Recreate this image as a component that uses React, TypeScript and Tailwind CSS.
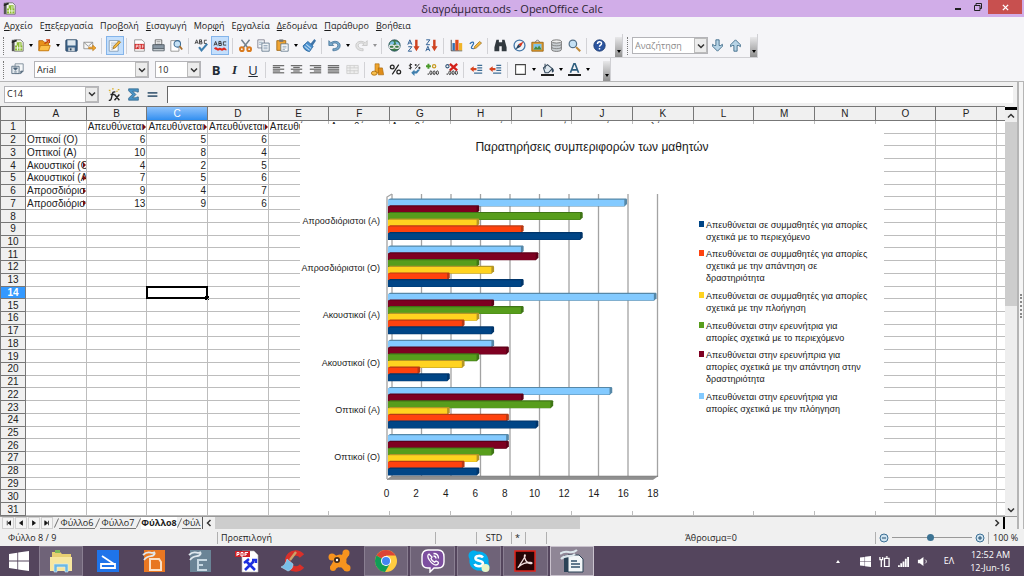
import React from 'react';
import { FaViber, FaSkype } from 'react-icons/fa';

const MENUS = ['Αρχείο', 'Επεξεργασία', 'Προβολή', 'Εισαγωγή', 'Μορφή', 'Εργαλεία', 'Δεδομένα', 'Παράθυρο', 'Βοήθεια'];
// index of the underlined accelerator letter in each menu name
const ACCEL = [0, 1, 3, 0, 3, 1, 0, 0, 0];

const COLS = 'ABCDEFGHIJKLMNOP'.split('');

const CELLS: Record<number, string[]> = {
    1: ['', 'Απευθύνεται', 'Απευθύνεται', 'Απευθύνεται', 'Απευθύνεται', 'Απευθύνεται', 'Απευθύνεται στην ερευνήτρια για απορίες σχετικά με την πλόηγηση'],
    2: ['Οπτικοί (Ο)', '6', '5', '6'],
    3: ['Οπτικοί (Α)', '10', '8', '4'],
    4: ['Ακουστικοί (Ο', '4', '2', '5'],
    5: ['Ακουστικοί (Α', '7', '5', '6'],
    6: ['Απροσδιόρισ', '9', '4', '7'],
    7: ['Απροσδιόρισ', '13', '9', '6'],
};

const SERIES = [
    { color: '#004586', dark: '#00356a', lines: ['Απευθύνεται σε συμμαθητές για απορίες', 'σχετικά με το περιεχόμενο'], y: 228 },
    { color: '#ff420e', dark: '#b83a14', lines: ['Απευθύνεται σε συμμαθητές για απορίες', 'σχετικά με την απάντηση σε', 'δραστηριότητα'], y: 257 },
    { color: '#ffd320', dark: '#b39627', lines: ['Απευθύνεται σε συμμαθητές για απορίες', 'σχετικά με την πλοήγηση'], y: 299 },
    { color: '#579d1c', dark: '#3f7516', lines: ['Απευθύνεται στην ερευνήτρια για', 'απορίες σχετικά με το περιεχόμενο'], y: 329 },
    { color: '#7e0021', dark: '#5c0018', lines: ['Απευθύνεται στην ερευνήπρια για', 'απορίες σχετικά με την απάντηση στην', 'δραστηριότητα'], y: 358 },
    { color: '#83caff', dark: '#5688a8', lines: ['Απευθύνεται στην ερευνήτρια για', 'απορίες σχετικά με την πλόηγηση'], y: 400 },
];

// values go from the top bar of the group to the bottom one
const GROUPS = [
    { name: 'Απροσδιόριστοι (Α)', values: [16, 6, 13, 6, 9, 13] },
    { name: 'Απροσδιόριστοι (Ο)', values: [9, 10, 6, 7, 4, 9] },
    { name: 'Ακουστικοί (Α)', values: [18, 7, 9, 6, 5, 7] },
    { name: 'Ακουστικοί (Ο)', values: [7, 8, 6, 5, 2, 4] },
    { name: 'Οπτικοί (Α)', values: [15, 9, 11, 4, 8, 10] },
    { name: 'Οπτικοί (Ο)', values: [8, 8, 7, 6, 5, 6] },
];

const lines = (xs: number[][]) => (
    <g fill="#6b6b6b">
        {xs.map(([x, w], i) => <rect key={i} x={x} y={2.5 + i * 2.2} width={w} height="1.5" />)}
    </g>
);

const ICONS: Record<string, React.ReactNode> = {
    new: <><path d="M1 1h3v14H1z" fill="#555" /><path d="M4 1h8l3 3v11H4z" fill="#f4f7ee" stroke="#666" /><path d="M5 8h9v6H5zM7 4h6v10H7z" fill="#8dbb2f" /><path d="M5 11h9M8 8v6M11 5v9" stroke="#fff" /><path d="M1 4c3 0 3-2 6-2" stroke="#222" strokeWidth="2" fill="none" /></>,
    open: <><path d="M1 2h5l2 2h5v10H1z" fill="#e8921c" stroke="#b36308" /><path d="M3 8h12l-2 6.500H1z" fill="#fbc04a" stroke="#c47712" /><path d="M8 6l5-4M10 1h4v4" stroke="#c43c12" strokeWidth="1.500" fill="none" /></>,
    save: <><rect x="1" y="1" width="14" height="14" rx="1" fill="#3b6288" stroke="#27435f" /><path d="M3 1.500h10V8H3z" fill="#dfe8ef" /><path d="M4 10.500h8V15H4z" fill="#cbd3da" /><path d="M6 11.500h2V14H6z" fill="#27435f" /></>,
    mail: <><path d="M1 4h11v8H1z" fill="#f5f5f5" stroke="#888" /><path d="M1 4l5.500 5L12 4" fill="none" stroke="#888" /><path d="M7 10h5V7.500l4 3.500-4 3.500V12H7z" fill="#f0a52c" stroke="#b8700d" strokeWidth=".7" /></>,
    edit: <><path d="M1.500 2h11v13h-11z" fill="#fff" stroke="#7d94ab" /><path d="M3.500 5h7M3.500 7.500h7M3.500 10h4M3.500 12.500h3" stroke="#9ab" /><path d="M6 12l1-3 6.500-7 2 2L9 11z" fill="#f3b63b" stroke="#8a6217" strokeWidth=".8" /></>,
    pdf: <><path d="M2 1h9l3 3v11H2z" fill="#fff" stroke="#888" /><path d="M2 6h12v6.500H2z" fill="#d32f2f" /><path d="M4 11.500V7.500h1.800v1.700H4M7.500 7.500v4H9v-4zM11.500 11.500v-4H13M11.500 9.500H13" stroke="#fff" fill="none" strokeWidth=".8" /></>,
    print: <><path d="M4 1h8v6H4z" fill="#fff" stroke="#555" /><path d="M1 7h14v5H1z" fill="#8997a3" stroke="#47525c" /><path d="M1 12h14v2.500H1z" fill="#dfe4e8" stroke="#47525c" /><path d="M5.500 3h5M5.500 5h5" stroke="#999" /></>,
    preview: <><path d="M1 2h10v13H1z" fill="#fff" stroke="#888" /><circle cx="9" cy="6" r="4" fill="#c5e1f5" stroke="#3f6e95" strokeWidth="1.300" /><path d="M12 9l3 4" stroke="#a86d2a" strokeWidth="2.200" /></>,
    spell: <><path d="M0 6l2-5 2 5M.7 4.500h2.600M5.500 1v5h3V3.500h-3 2.500V1zM14.500 1.500h-3v4h3" stroke="#333" fill="none" /><path d="M5 10l3 4 7-8" stroke="#3f7fae" strokeWidth="2.600" fill="none" /></>,
    auto: <><path d="M0 8l2-5 2 5M.7 6.500h2.600M6 3v5h3V5.500H6 8.500V3zM15 3.500h-3.500v4H15" stroke="#333" fill="none" strokeWidth="1.100" /><path d="M1 12.500c2-3 3 2 5 0s3 2 5 0 3 1 4 0" stroke="#e0281e" strokeWidth="2.600" fill="none" /></>,
    cut: <><path d="M3 1l8 10M13 1L5 11" stroke="#73818d" strokeWidth="1.800" /><circle cx="3.500" cy="12.500" r="2.300" fill="none" stroke="#d97a1e" strokeWidth="2.400" /><circle cx="12.500" cy="12.500" r="2.300" fill="none" stroke="#d97a1e" strokeWidth="2.400" /></>,
    copy: <><path d="M1 1h8v10H1z" fill="#f2f5f8" stroke="#778" /><path d="M6 5h9v10H6z" fill="#f2f5f8" stroke="#5d7388" /><path d="M2.500 4h4M2.500 6.500h3M8 8h5M8 10h5M8 12h5" stroke="#8aa0b5" /></>,
    paste: <><path d="M1 2h11v12H1z" fill="#f0a534" stroke="#9b6310" /><path d="M4 .5h5v3H4z" fill="#777" /><path d="M6 6h9v9H6z" fill="#fff" stroke="#5d7388" /><path d="M8 9h5M8 11h5M8 13h3" stroke="#8aa0b5" /></>,
    brush: <><path d="M9 6l5-6 2 2-4 6z" fill="#3f74a8" /><path d="M6 3l6.500 6L8 15.500c-4-.5-7-3-8-7z" fill="#4a90cf" stroke="#235f98" /><path d="M2 9l6 5M4 6.500l6 5" stroke="#bcdcf5" strokeWidth="1.300" /></>,
    undo: <path d="M1 2v6h6L5 6c3-2 7-1 7 2s-3 4-6 4v2.500c5 0 9-2 9-6.500S9 1 3.500 4.500z" fill="#78a7c9" stroke="#33658c" strokeWidth=".8" />,
    redo: <path d="M15 2v6H9l2-2C8 4 4 5 4 8s3 4 6 4v2.500C5 14.500 1 12.500 1 8s6-7 11.500-3.500z" fill="#e2e2e2" stroke="#bbb" strokeWidth=".8" />,
    link: <><circle cx="8" cy="8" r="7" fill="#3b7d45" stroke="#244b5f" /><path d="M3 4c3-3 6 0 4 2S3 8 2 7zM9 3c3 0 5 2 5 4s-3 0-4-1z" fill="#7ec0e8" /><rect x="1.500" y="7.500" width="6" height="4" rx="2" fill="none" stroke="#e8e8e8" strokeWidth="1.400" /><rect x="8" y="7.500" width="6" height="4" rx="2" fill="none" stroke="#e8e8e8" strokeWidth="1.400" /></>,
    az: <><path d="M1 7l2.500-6L6 7M2 5h3M1.500 9.500H6L1.500 15H6" stroke="#2f5f93" strokeWidth="1.200" fill="none" /><path d="M10 1h3v8h2.500L11.500 15 8 9h2z" fill="#cf4321" /></>,
    za: <><path d="M1.500 1H6L1.500 7H6M1 15l2.500-6L6 15M2 13h3" stroke="#2f5f93" strokeWidth="1.200" fill="none" /><path d="M10 1h3v8h2.500L11.500 15 8 9h2z" fill="#cf4321" /></>,
    chart: <><path d="M1.500 1v13.500H15" stroke="#333" fill="none" /><path d="M3 5h3v9H3z" fill="#2f6fb2" /><path d="M6.500 1h4v13h-4z" fill="#e04a1c" /><path d="M11 5h4v9h-4z" fill="#f0b428" /></>,
    draw: <><path d="M1 6c3-4 6-2 4 1s-4 5 1 5" stroke="#2f6fb2" strokeWidth="1.500" fill="none" /><path d="M6 12l1-3 6-6 2.500 2L9 11z" fill="#f3b63b" stroke="#8a6217" strokeWidth=".8" /></>,
    find: <path d="M3 1h3v3h4V1h3l2.500 9v5h-6V9h-3v6h-6v-5z" fill="#32393f" />,
    nav: <><circle cx="8" cy="8" r="6.700" fill="#eef4fa" stroke="#4577a8" strokeWidth="1.600" /><path d="M13 3L9.500 9.500 6.500 6.500z" fill="#d8361d" /><path d="M3 13l3.500-6.500 3 3z" fill="#27435f" /></>,
    gallery: <><path d="M5 4l3-3 3 3" stroke="#555" fill="none" /><path d="M1 4h14v11H1z" fill="#e09a2d" stroke="#93600f" /><path d="M3 6h10v7H3z" fill="#7cc2e8" /><path d="M3 13l3-4 2 2 2-3 3 5z" fill="#4a8a3a" /></>,
    data: <><path d="M2 3v10c0 3 12 3 12 0V3z" fill="#c9ced2" stroke="#666" /><ellipse cx="8" cy="3" rx="6" ry="2" fill="#eee" stroke="#666" /><path d="M2 6.500c0 2.500 12 2.500 12 0M2 10c0 2.500 12 2.500 12 0" stroke="#777" fill="none" /></>,
    zoom: <><circle cx="6" cy="6" r="4.600" fill="#c5e1f5" stroke="#55718a" strokeWidth="1.500" /><path d="M10 10l5 5" stroke="#c08a3a" strokeWidth="2.600" /></>,
    help: <><circle cx="8" cy="8" r="7" fill="#2c55a0" stroke="#18366d" /><path d="M5.500 6c0-3.500 5-3.500 5-.5 0 2-2.500 2-2.500 4M8 11v2" stroke="#fff" strokeWidth="1.800" fill="none" /></>,
    styles: <><path d="M5 1h10v9l-3 3H5z" fill="#f5f7f9" stroke="#70808f" /><path d="M1 4h9v9H1z" fill="#e3e9ee" stroke="#4d6479" /><path d="M3 6h5l-2.500 3zM4 11h3M12 13v-3h3" fill="#4d6479" stroke="#4d6479" /></>,
    left: lines([[1, 14], [1, 9], [1, 14], [1, 9], [1, 14]]),
    center: lines([[1, 14], [4, 8], [1, 14], [4, 8], [1, 14]]),
    right: lines([[1, 14], [6, 9], [1, 14], [6, 9], [1, 14]]),
    justify: lines([[1, 14], [1, 14], [1, 14], [1, 14], [1, 14]]),
    merge: <><path d="M1 3h14v10H1z" fill="#eee" stroke="#ccc" /><path d="M1 6h14M1 9.500h14M5 3v10M10 3v3M10 9v4" stroke="#ccc" /></>,
    currency: <><path d="M5 1h5v11H5z" fill="#f0a52c" stroke="#a8690b" strokeWidth=".8" /><ellipse cx="4" cy="12.500" rx="3.500" ry="2.500" fill="#f7bf4d" stroke="#a8690b" /><path d="M9 6h5l1.500 8.500H9z" fill="#e08d1a" stroke="#a8690b" strokeWidth=".8" /></>,
    percent: <><circle cx="4" cy="5" r="2.300" fill="none" stroke="#222" strokeWidth="1.600" /><circle cx="12" cy="11" r="2.300" fill="none" stroke="#222" strokeWidth="1.600" /><path d="M12 2L4 14" stroke="#222" strokeWidth="1.500" /></>,
    standard: <><path d="M5 2C1 1 1 4 3 4.500s2 3-2 2M3 .5v7.500M9 7l5-6" stroke="#333" fill="none" strokeWidth="1.200" /><circle cx="9.500" cy="2.500" r="1.300" fill="#333" /><circle cx="14" cy="6" r="1.300" fill="#333" /><path d="M4 12l4-4v2h2l2-2h3l-4 5H8v3z" fill="#3f7fae" /></>,
    adddec: <><path d="M3 1v6M0 4h6" stroke="#4a9a2a" strokeWidth="2.400" /><circle cx="10" cy="4" r="2" fill="none" stroke="#c99b22" strokeWidth="1.500" /><g fill="none" stroke="#333" strokeWidth="1.200"><ellipse cx="6" cy="12" rx="1.300" ry="2.300" /><ellipse cx="10" cy="12" rx="1.300" ry="2.300" /><ellipse cx="14" cy="12" rx="1.300" ry="2.300" /></g><path d="M2 13h1.500v1.500H2z" fill="#333" /></>,
    deldec: <><circle cx="3" cy="4" r="2" fill="none" stroke="#357" strokeWidth="1.300" /><g fill="none" stroke="#333" strokeWidth="1.200"><ellipse cx="6" cy="12" rx="1.300" ry="2.300" /><ellipse cx="10" cy="12" rx="1.300" ry="2.300" /><ellipse cx="14" cy="12" rx="1.300" ry="2.300" /></g><path d="M2 13h1.500v1.500H2z" fill="#333" /><path d="M6 1l9 8M15 1L6 9" stroke="#d3201a" strokeWidth="2.800" /></>,
    outdent: <><path d="M9 3h6M9 6h6M9 9h6M5 12.500h10" stroke="#3f6e95" strokeWidth="1.500" /><path d="M0 7.500L4.500 4v2H8v3H4.500v2z" fill="#d8431d" /></>,
    border: <path d="M2 2h12v12H2z" fill="#fff" stroke="#444" strokeWidth="1.300" />,
    fill: <><path d="M3 6l5-4 6 5-5 5H5z" fill="#dfe8ef" stroke="#33485c" strokeWidth="1.300" /><path d="M5 1v6M14 7c2 2 1 4 0 4z" stroke="#33485c" fill="#3f7fae" strokeWidth="1.300" /><path d="M0 13.500h16V16H0z" fill="#222" /></>,
    font: <><path d="M3 12L7.300 1h1.400L13 12M5 8.500h6" stroke="#2f5f7f" strokeWidth="2" fill="none" /><path d="M0 13.500h16V16H0z" fill="#222" /></>,
    down: <path d="M6 1h4v7h2l2-1.500V9l-6 6-6-6V6.500L4 8h2z" fill="#b8d4e6" stroke="#2f5f7f" />,
    up: <path d="M6 15h4V8h2l2 1.500V7L8 1 2 7v2.500L4 8h2z" fill="#b8d4e6" stroke="#2f5f7f" />,
    fx: <><path d="M1 15c3 1 3-2 4-6 .7-3.500 1.300-5 4-4M3 8h5M8 8l6 7M14 8l-6 7" stroke="#222" strokeWidth="1.700" fill="none" /><path d="M1 3h2M5 1h2M12 2h2M2 5h1M10 4h2" stroke="#d8b02a" strokeWidth="1.500" /></>,
    sum: <path d="M2 1h12v4h-2L11 4H7l4 4-4 4h4l1-1h2v4H2v-2.500L6.500 8 2 3.500z" fill="#4a93c4" stroke="#23587f" strokeWidth=".8" />,
    equals: <path d="M2 5h12v2.200H2zM2 9h12v2.200H2z" fill="#48647c" />,
};

const Icon = ({ name }: { name: string }) => (
    <svg viewBox="0 0 16 16" className="h-[13px] w-[13px] shrink-0 overflow-visible">{ICONS[name]}</svg>
);

function Tools({ items }: { items: string[] }) {
    return (
        <>
            {items.map((it, i) => {
                if (it === '|') return <span key={i} className="mx-[2px] h-4 w-[2px] border-l border-[#d2d2d6]" />;
                if (it === 'v') return <button key={i} aria-label="more" className="flex h-4 w-2 items-center justify-center"><Caret /></button>;
                if (it === '-v') return <button key={i} disabled aria-label="more" className="flex h-4 w-2 items-center justify-center opacity-40"><Caret /></button>;
                const on = it === 'edit' || it === 'auto';
                return (
                    <button key={i} aria-label={it} className={`flex h-[19px] w-[18px] items-center justify-center text-[13px] leading-4 text-[#222b35] ${on ? 'border border-[#84b4ea] bg-[#c4dffc]' : ''}`}>
                        {it === 'B' && <b>B</b>}
                        {it === 'I' && <i className="font-['Liberation_Serif',serif] font-bold">I</i>}
                        {it === 'U' && <u>U</u>}
                        {it.length > 1 && <Icon name={it} />}
                    </button>
                );
            })}
        </>
    );
}

const Caret = () => <span className="h-0 w-0 border-x-[2px] border-t-[3px] border-x-transparent border-t-black" />;

const Chevron = () => (
    <svg viewBox="0 0 8 8" className="h-2 w-2"><path d="M1 2.500l3 3 3-3" fill="none" stroke="#333" strokeWidth="1.500" /></svg>
);

const Grip = () => <span className="h-[18px] w-0 border-l border-dotted border-[#777]" />;

const Overflow = () => (
    <button aria-label="toolbar options" className="flex h-5 w-[7px] items-end justify-center self-end bg-gradient-to-b from-[#e8e8ea] to-[#909090] pb-1"><Caret /></button>
);

function Combo({ label, value, className, placeholder }: { label: string; value?: string; className: string; placeholder?: string }) {
    return (
        <div className={`flex h-[17px] items-stretch border border-[#b4b4b8] bg-white ${className}`}>
            <input aria-label={label} defaultValue={value} placeholder={placeholder} className="w-0 min-w-0 flex-1 px-[2px] outline-none placeholder:text-[#8a8a8a]" />
            <button aria-label={`${label} list`} className="flex w-[13px] items-center justify-center border border-[#bbb] bg-[#ececec]"><Chevron /></button>
        </div>
    );
}

function Chart() {
    const unit = 14.77;
    return (
        <svg viewBox="300 124 584 387" className="absolute left-[300px] top-[18px] h-[387px] w-[584px] bg-white" fontFamily="'Liberation Sans', Arial, sans-serif" fill="#1a1a1a">
            <text x="592" y="151" fontSize="12" textAnchor="middle">Παρατηρήσεις συμπεριφορών των μαθητών</text>
            <g fill="none" stroke="#a3a3a3" strokeWidth="1.300">
                <path d="M387 479V197l5-3" />
                {[0, 1, 2, 3, 4, 5, 6, 7, 8, 9].map((i) => <path key={i} d={`M${392 + i * 29.5} 194V477`} />)}
            </g>
            <path d="M387 479.500l5-3.500h266l-5 3.500z" fill="#8f8f8f" stroke="#777" strokeWidth=".5" />
            {GROUPS.map((g, gi) => (
                <g key={g.name}>
                    <text x="380" y={224 + gi * 47.2} fontSize="9" textAnchor="end">{g.name}</text>
                    {g.values.map((v, i) => {
                        const s = SERIES[5 - i];
                        const y = 200 + gi * 47.1 + i * 6.7;
                        const end = 388 + v * unit;
                        return (
                            <g key={i}>
                                <path d={`M388 ${y}l2-1.500H${end + 2}l.7 1v4.500l-2.500 2.500H388z`} fill={s.dark} />
                                <path d={`M388 ${y - 0.3}H${end}v6.400H388z`} fill={s.color} />
                            </g>
                        );
                    })}
                </g>
            ))}
            {[0, 2, 4, 6, 8, 10, 12, 14, 16, 18].map((n) => (
                <text key={n} x={386.5 + n * 14.8} y="497" fontSize="10" textAnchor="middle">{n}</text>
            ))}
            {SERIES.map((s) => (
                <g key={s.color}>
                    <rect x="699" y={s.y - 7} width="5" height="6" fill={s.color} />
                    {s.lines.map((l, i) => <text key={i} x="706" y={s.y + i * 12} fontSize="9">{l}</text>)}
                </g>
            ))}
        </svg>
    );
}

// marks a cell whose text is wider than its column
const Clip = () => <span className="absolute right-0 top-[3px] h-0 w-0 border-y-[3px] border-l-[3px] border-y-transparent border-l-[#7a0d0d]" />;

function Sheet() {
    return (
        <div className="relative h-full min-w-0 flex-1 overflow-hidden bg-white font-['Liberation_Sans',Arial,sans-serif] text-[10px] leading-[11px] text-[#222]">
            <table className="h-full w-full table-fixed border-separate border-spacing-0">
                <colgroup>
                    <col className="w-[26px]" />
                    {COLS.map((c) => <col key={c} />)}
                    <col className="w-2" />
                </colgroup>
                <thead>
                    <tr className="h-[15px] bg-[#f0f0f0]">
                        <th className="border border-[#777] p-0" />
                        {COLS.map((c) => (
                            <th key={c} className={`border-y border-r border-[#777] p-0 font-normal ${c === 'C' ? 'bg-gradient-to-b from-[#8cc2fb] to-[#2f8ff0] text-white' : ''}`}>{c}</th>
                        ))}
                        <th className="border-y border-[#777] p-0" />
                    </tr>
                </thead>
                <tbody>
                    {Array.from({ length: 31 }, (_, i) => i + 1).map((r) => (
                        <tr key={r}>
                            <th className={`border-x border-b border-[#777] p-0 ${r === 14 ? 'bg-[#3399ff] font-bold text-white' : 'bg-[#f0f0f0] font-normal'}`}>{r}</th>
                            {COLS.map((c, ci) => {
                                const v = CELLS[r]?.[ci] ?? '';
                                const num = /^\d+$/.test(v);
                                const clipped = (r === 1 && v !== '' && c !== 'G') || (r > 3 && c === 'A' && v !== '');
                                return (
                                    <td key={c} className={`relative whitespace-nowrap border-b border-r border-[#bdbdbd] p-0 pl-px ${num ? 'pr-px text-right' : ''}`}>
                                        <div className={clipped ? 'overflow-hidden' : ''}>{v}</div>
                                        {clipped && <Clip />}
                                        {r === 14 && c === 'C' && (
                                            <div className="absolute -inset-px border-2 border-black">
                                                <span className="absolute -bottom-[3px] -right-[3px] h-1 w-1 bg-black" />
                                            </div>
                                        )}
                                    </td>
                                );
                            })}
                            <td className="border-b border-[#bdbdbd] p-0" />
                        </tr>
                    ))}
                </tbody>
            </table>
            <Chart />
        </div>
    );
}

const TASKS: { name: string; open?: boolean; icon: React.ReactNode }[] = [
    { name: 'Explorer', open: true, icon: <><path d="M3 3h8l2 2h9v17H3z" fill="#e8cf72" /><path d="M1 8h22v14H1z" fill="#f7e7a0" /><path d="M6 1h5v3H6z" fill="#7fb95a" /><path d="M5 23v-8h14v8h-3v-5H8v5z" fill="#6cb8e2" stroke="#d8effa" strokeWidth=".6" /></> },
    { name: 'Scan', icon: <><path d="M1 1h22v22H1z" fill="#1f74ea" /><path d="M6 7l12 8M5 15h14v4H5z" fill="none" stroke="#fff" strokeWidth="1.800" /></> },
    { name: 'Draw', icon: <><path d="M2 1h21v22H2z" fill="#e87722" /><path d="M8 10h9l2 3v8H8z" fill="none" stroke="#fbe0c5" strokeWidth="2" /><path d="M1 6c6-6 8 0 12-3M2 11c5-7 9-1 11-7" stroke="#dfe8ee" strokeWidth="1.800" fill="none" /></> },
    { name: 'Office', icon: <><path d="M2 1h21v22H2z" fill="#6a8496" /><path d="M10 11h9M10 16h5M10 21h9M10 10v12" stroke="#c7d8e2" strokeWidth="2" /><path d="M1 6c6-6 8 0 12-3M2 11c5-7 9-1 11-7" stroke="#dfe8ee" strokeWidth="1.800" fill="none" /></> },
    { name: 'PDFill', icon: <><path d="M7 2h12l4 4v17H7z" fill="#fff" stroke="#bbb" strokeWidth=".6" /><path d="M0 2h15v6H0z" fill="#cf1f25" /><path d="M2 7V3.500h2v2H2M6 7V3.500h2V7zM10 7V3.500h3M10 5.200h2" stroke="#fff" fill="none" /><path d="M11 12l9 9M19 12l-9 9" stroke="#1c2fe0" strokeWidth="2.600" /><path d="M9 14l5-4M17 11h4v3" stroke="#1c2fe0" strokeWidth="2.400" fill="none" /></> },
    { name: 'CCleaner', icon: <><path d="M21 7A8 8 0 1 0 21 17" fill="none" stroke="#d9302a" strokeWidth="5.500" /><path d="M15 3l-6 8" stroke="#c9a36a" strokeWidth="2.400" /><path d="M6 10l6 5c0 4-2 6-5 7l-7-4c3-1 5-4 6-8z" fill="#78bfe8" stroke="#b5dcf3" strokeWidth=".6" /></> },
    { name: 'Avast', icon: <g fill="#f7941e"><circle cx="12" cy="12" r="6.500" /><circle cx="4" cy="8" r="3.500" /><circle cx="18" cy="4" r="3.500" /><circle cx="19" cy="19" r="3.500" /><circle cx="5" cy="19" r="3" /><path d="M4 5l8 3 5-6 4 4-4 6 5 7-5 3-5-5-6 4-4-3 4-7-5-5z" /><circle cx="9" cy="11" r="3" fill="#3d2a1d" /><circle cx="9" cy="11" r="1.200" fill="#fff" /></g> },
    { name: 'Chrome', open: true, icon: <><circle cx="12" cy="12" r="11" fill="#ffcd40" /><path d="M12 12L2.500 6.500A11 11 0 0 1 21.500 6.500H12z" fill="#db4437" /><path d="M2.500 6.500A11 11 0 0 0 11 23l5-8.500-4-2.500z" fill="#0f9d58" /><circle cx="12" cy="12" r="5" fill="#fff" /><circle cx="12" cy="12" r="4" fill="#4285f4" /></> },
    { name: 'Viber', open: true, icon: <><path d="M7 1h10c4 0 6 3 6 7v5c0 4-2 6-6 6h-4l-4 4v-4H7c-4 0-6-2-6-6V8c0-4 2-7 6-7z" fill="#7d4fa0" stroke="#fff" strokeWidth="1.400" /><path d="M8 5c-4 2 3 11 7 11 2 0 3-2 2-3l-2-1-1.500 1.200C11.500 12.500 10.500 11 10 9.500L11 8zM12.500 4.500c3 0 5 2 5 5M12.500 7c1.500 0 2.500 1 2.500 2.500" fill="none" stroke="#fff" strokeWidth="1.300" /></> },
    { name: 'Skype', open: true, icon: <><g color="#00aff0"><FaSkype x="0" y="0" size="24" /></g><path d="M7 6h10v12H7z" fill="#00aff0" /><path d="M16 8.500c-2-2.500-8-2-7.500 1s7.500 1.500 7.500 5-7 3.500-8.500.5" fill="none" stroke="#fff" strokeWidth="2.600" /><circle cx="18.500" cy="19" r="4" fill="#e9f5c8" /></> },
    { name: 'Acrobat', open: true, icon: <><path d="M2 2h20v20H2z" fill="#250506" stroke="#e2231a" strokeWidth="1.500" /><path d="M12 6c-1.500 0 0 5 2 7s5 2 5 1-7-1-11 2-3 3-1.500.5S13.500 6 12 6z" fill="none" stroke="#f1dede" strokeWidth="1.300" /></> },
    { name: 'Writer', open: true, icon: <><path d="M4 6h4v17H4z" fill="#2b4256" /><path d="M8 6h11l4 4v13H8z" fill="#f2f6f8" stroke="#2b4256" /><path d="M11 12h6M11 15h9M11 18h9" stroke="#33526b" strokeWidth="1.500" /><path d="M0 5c7-6 10 2 17-4M1 10c6-6 9 0 14-5" stroke="#dbe6ec" strokeWidth="2.200" fill="none" /></> },
];

const Divider = ({ className = '' }: { className?: string }) => <span className={`h-3 border-l border-[#b0b0b0] ${className}`} />;

const winLogo = <path d="M0 3.500L10 2v9.500H0zM11 1.800L24 0v11.500H11zM0 12.500h10V22L0 20.500zM11 12.500h13V24l-13-1.800z" fill="#fff" />;

export default function App() {
    return (
        <div className="flex h-screen flex-col overflow-hidden bg-[#f5f5f8] font-['Open_Sans','Noto_Sans',sans-serif] text-[9px] leading-3 text-[#1c1c1c]">
            <header className="relative flex h-[17px] shrink-0 items-center justify-between bg-[#d1ade8] pl-[3px]">
                <Icon name="new" />
                <h1 className="absolute inset-x-0 text-center text-[11px] leading-4 text-[#2b2332]">διαγράμματα.ods - OpenOffice Calc</h1>
                <div className="relative flex h-full items-start">
                    <button aria-label="minimize" className="flex h-[14px] w-5 items-center justify-center"><span className="mt-1 h-[2px] w-[6px] bg-[#222]" /></button>
                    <button aria-label="restore" className="flex h-[14px] w-5 items-center justify-center">
                        <svg viewBox="0 0 8 8" className="h-2 w-2"><path d="M2 2V.5h5.500v5H6M.5 2.500H6v5H.5z" fill="none" stroke="#222" /></svg>
                    </button>
                    <button aria-label="close" className="mr-[2px] flex h-[14px] w-[34px] items-center justify-center bg-[#c8504f]">
                        <svg viewBox="0 0 8 8" className="h-[7px] w-[7px]"><path d="M1 1l6 6M7 1L1 7" stroke="#fff" strokeWidth="1.600" /></svg>
                    </button>
                </div>
            </header>

            <nav className="flex h-[17px] shrink-0 items-center gap-[7px] px-1">
                {MENUS.map((m, i) => (
                    <button key={m}>{m.slice(0, ACCEL[i])}<u>{m[ACCEL[i]]}</u>{m.slice(ACCEL[i] + 1)}</button>
                ))}
            </nav>

            <div className="flex h-6 shrink-0 items-center">
                <div className="flex h-full items-center border-b border-r border-[#d0d0d4] pl-[3px]">
                    <Grip />
                    <div className="ml-1 flex w-[601px] items-center justify-between">
                        <Tools items={['new', 'v', 'open', 'v', 'save', 'mail', '|', 'edit', '|', 'pdf', 'print', 'preview', '|', 'spell', 'auto', '|', 'cut', 'copy', 'paste', 'v', 'brush', '|', 'undo', 'v', 'redo', '-v', '|', 'link', 'az', 'za', '|', 'chart', 'draw', '|', 'find', 'nav', 'gallery', 'data', 'zoom', '|', 'help']} />
                    </div>
                    <span className="w-[6px]" />
                    <Overflow />
                </div>
                <div className="flex h-full items-center border-b border-r border-[#d0d0d4] pl-1">
                    <Grip />
                    <Combo label="Αναζήτηση" placeholder="Αναζήτηση" className="ml-1 w-[76px]" />
                    <div className="flex"><Tools items={['down', 'up']} /></div>
                    <span className="w-[6px]" />
                    <Overflow />
                </div>
            </div>

            <div className="flex h-[23px] shrink-0 items-center">
                <div className="flex h-full items-center border-r border-[#d0d0d4] pl-[3px]">
                    <Grip />
                    <span className="ml-1 mr-2 flex"><Tools items={['styles']} /></span>
                    <Combo label="Font" value="Arial" className="w-[115px]" />
                    <Combo label="Size" value="10" className="ml-[6px] w-[46px]" />
                    <div className="ml-[6px] flex w-[385px] items-center justify-between">
                        <Tools items={['B', 'I', 'U', '|', 'left', 'center', 'right', 'justify', 'merge', '|', 'currency', 'percent', 'standard', 'adddec', 'deldec', '|', 'outdent', 'outdent', '|', 'border', 'v', 'fill', 'v', 'font', 'v']} />
                    </div>
                    <span className="w-[11px]" />
                    <Overflow />
                </div>
            </div>

            <main className="flex min-h-0 flex-1">
                <div className="flex min-w-0 flex-1 flex-col border-t border-[#b5b5b5] bg-[#f0f0f0]">
                    <div className="flex h-6 shrink-0 items-center pl-1 pr-1">
                        <Combo label="Name box" value="C14" className="w-[95px]" />
                        <div className="ml-[6px] flex gap-px"><Tools items={['fx', 'sum', 'equals']} /></div>
                        <input aria-label="Formula" className="ml-[6px] h-[17px] min-w-0 flex-1 border-l border-t border-[#666] bg-white px-1 outline-none" />
                    </div>

                    <div className="flex min-h-0 flex-1">
                        <Sheet />
                        <div className="flex w-3 shrink-0 flex-col items-center bg-[#eeeeee]">
                            <span className="mt-px h-[3px] w-full bg-black" />
                            <button aria-label="scroll up" className="flex h-3 items-center"><span className="rotate-180"><Chevron /></span></button>
                            <span className="h-[184px] w-full bg-[#cdcdcd]" />
                            <button aria-label="scroll down" className="mt-auto flex h-[13px] items-center"><Chevron /></button>
                        </div>
                    </div>

                    <div className="flex h-[13px] shrink-0 items-center border-t border-[#999] pl-[2px]">
                        {['M3 1v6M8 1L4 4l4 3z', 'M6 1L2 4l4 3z', 'M2 1l4 3-4 3z', 'M6 1v6M1 1l4 3-4 3z'].map((d) => (
                            <button key={d} aria-label="sheet navigation" className="mr-px flex h-3 w-3 items-center justify-center border border-[#d0d0d0] bg-[#f4f4f4]">
                                <svg viewBox="0 0 8 8" className="h-[6px] w-[6px]"><path d={d} stroke="#111" fill="#111" /></svg>
                            </button>
                        ))}
                        {['Φύλλο6', 'Φύλλο7', 'Φύλλο8', 'Φύλ'].map((t) => (
                            <React.Fragment key={t}>
                                <svg viewBox="0 0 6 12" className="h-3 w-[5px]"><path d="M.5 11.500L5.500.5" stroke="#555" /></svg>
                                <button className={`h-3 whitespace-nowrap ${t === 'Φύλ' ? 'w-[19px]' : 'w-[36px]'} ${t === 'Φύλλο8' ? 'bg-white font-bold' : 'border-b border-[#777]'}`}>{t}</button>
                            </React.Fragment>
                        ))}
                        <span className="ml-px h-3 border-l border-[#555]" />
                        <button aria-label="scroll left" className="flex h-3 w-3 items-center justify-center"><span className="rotate-90"><Chevron /></span></button>
                        <div className="h-3 flex-1"><div className="h-full w-[47%] bg-[#cdcdcd]" /></div>
                        <button aria-label="scroll right" className="flex h-3 w-3 items-center justify-center"><span className="-rotate-90"><Chevron /></span></button>
                        <span className="mr-3 h-3 w-[2px] bg-black" />
                    </div>
                </div>
                <div className="flex w-[7px] shrink-0 items-center justify-center border-l-2 border-r border-t border-[#b5b5b5] bg-[#f5f5f5]">
                    <span className="h-6 border-l-2 border-dotted border-[#888]" />
                </div>
            </main>

            <footer className="flex h-[17px] shrink-0 items-center bg-[#f0f0f0] pl-2">
                <span className="w-[209px]">Φύλλο 8 / 9</span>
                <Divider />
                <span className="w-[217px] pl-[3px]">Προεπιλογή</span>
                <Divider className="w-[41px]" />
                <Divider />
                <span className="w-[34px] text-center">STD</span>
                <Divider />
                <span className="w-[13px] pl-[3px]">*</span>
                <Divider className="w-[21px]" />
                <Divider />
                <span className="flex-1 text-center">Άθροισμα=0</span>
                <Divider />
                <label className="flex items-center px-[3px]">
                    <svg viewBox="0 0 10 10" className="h-[10px] w-[10px]"><circle cx="5" cy="5" r="4" fill="#cfe3f0" stroke="#3c6f94" /><path d="M3 5h4" stroke="#234e6e" /></svg>
                    <input type="range" aria-label="Zoom" defaultValue={48} className="mx-[3px] h-2 w-20 appearance-none bg-[linear-gradient(#999,#999)] bg-[length:100%_1px] bg-center bg-no-repeat [&::-webkit-slider-thumb]:h-[7px] [&::-webkit-slider-thumb]:w-[7px] [&::-webkit-slider-thumb]:appearance-none [&::-webkit-slider-thumb]:rounded-full [&::-webkit-slider-thumb]:bg-[#3c7393]" />
                    <svg viewBox="0 0 10 10" className="h-[10px] w-[10px]"><circle cx="5" cy="5" r="4" fill="#cfe3f0" stroke="#3c6f94" /><path d="M3 5h4M5 3v4" stroke="#234e6e" /></svg>
                </label>
                <Divider />
                <span className="w-[35px] pl-1">100 %</span>
            </footer>

            <div className="flex h-[30px] shrink-0 items-stretch bg-[#54455d]">
                <button aria-label="Start" className="flex w-[38px] items-center justify-center">
                    <svg viewBox="0 0 24 24" className="h-5 w-5">{winLogo}</svg>
                </button>
                <div className="grid w-[557px] grid-cols-12">
                    {TASKS.map((t) => (
                        <button key={t.name} aria-label={t.name} className={`mx-px flex items-center justify-center ${t.name === 'Writer' ? 'border border-[#c9c2cd] bg-[#8f8696]' : t.open ? 'border border-[#8a7f92] bg-[#6f6378]' : ''}`}>
                            <svg viewBox="0 0 24 24" className="h-6 w-6">{t.icon}</svg>
                        </button>
                    ))}
                </div>
                <div className="ml-auto flex items-center gap-2 pr-[14px] text-[9px] text-white">
                    <span className="h-0 w-0 border-x-[2px] border-b-[3px] border-x-transparent border-b-white" />
                    <span className="w-1" />
                    <svg viewBox="0 0 24 24" className="h-[11px] w-[11px]">{winLogo}</svg>
                    <svg viewBox="0 0 12 12" className="h-[11px] w-[11px]"><path d="M1 1v3h3V1M2.500 4v8M6 2.500h5v9H6zM7.500 1h2" fill="none" stroke="#fff" strokeWidth="1.400" /></svg>
                    <svg viewBox="0 0 12 12" className="h-[11px] w-[11px]"><path d="M0 10h2v2H0zM2.500 8h2v4h-2zM5 6h2v6H5zM7.500 3h2v9h-2zM10 1h2v11h-2z" fill="#fff" /></svg>
                    <svg viewBox="0 0 12 12" className="h-[11px] w-[11px]"><path d="M1 4h2l4-3v10L3 8H1z" fill="#fff" /><path d="M9 4c1.500 1 1.500 3 0 4" stroke="#fff" fill="none" /></svg>
                    <span className="px-2">ΕΛ</span>
                    <div className="text-right leading-[13px]">
                        <div>12:52 AM</div>
                        <div>12-Jun-16</div>
                    </div>
                </div>
            </div>
        </div>
    );
}
